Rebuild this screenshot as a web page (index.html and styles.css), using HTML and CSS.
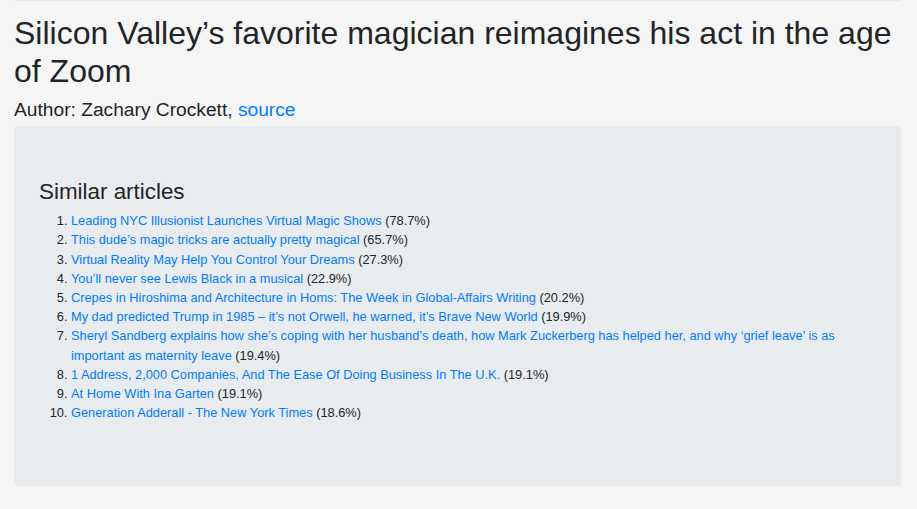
FILE: index.html
```html
<!DOCTYPE html>
<html>
<head>
<meta charset="utf-8">
<link rel="stylesheet" href="styles.css">
</head>
<body>
<div class="page">
  <hr class="rule">
  <h2 class="title">Silicon Valley’s favorite magician reimagines his act in the age of Zoom</h2>
  <p class="author">Author: Zachary Crockett, <a href="#">source</a></p>
  <div class="panel">
    <h4 class="panel-title">Similar articles</h4>
    <ol class="list">
      <li><a href="#">Leading NYC Illusionist Launches Virtual Magic Shows</a> (78.7%)</li>
      <li><a href="#">This dude’s magic tricks are actually pretty magical</a> (65.7%)</li>
      <li><a href="#">Virtual Reality May Help You Control Your Dreams</a> (27.3%)</li>
      <li><a href="#">You’ll never see Lewis Black in a musical</a> (22.9%)</li>
      <li><a href="#">Crepes in Hiroshima and Architecture in Homs: The Week in Global-Affairs Writing</a> (20.2%)</li>
      <li><a href="#">My dad predicted Trump in 1985 – it’s not Orwell, he warned, it’s Brave New World</a> (19.9%)</li>
      <li><a href="#">Sheryl Sandberg explains how she’s coping with her husband’s death, how Mark Zuckerberg has helped her, and why ‘grief leave’ is as important as maternity leave</a> (19.4%)</li>
      <li><a href="#">1 Address, 2,000 Companies, And The Ease Of Doing Business In The U.K.</a> (19.1%)</li>
      <li><a href="#">At Home With Ina Garten</a> (19.1%)</li>
      <li><a href="#">Generation Adderall - The New York Times</a> (18.6%)</li>
    </ol>
  </div>
</div>
</body>
</html>
```
FILE: styles.css
```css
html, body {
  margin: 0;
  padding: 0;
  background: #f5f5f5;
  color: #212529;
  font-family: "Liberation Sans", Arial, sans-serif;
}
a {
  color: #007bff;
  text-decoration: none;
}
.page {
  padding: 0 16px 0 14px;
}
.rule {
  margin: 0 0 13px 0;
  border: 0;
  border-top: 1px solid #e6e8ea;
}
.title {
  margin: 0 0 7px 0;
  font-size: 32px;
  font-weight: 400;
  line-height: 1.2;
}
.author {
  margin: 0 0 5px 0;
  font-size: 19.2px;
  line-height: 1.2;
}
.panel {
  background: #e9ecef;
  border-radius: 3px;
  padding: 53px 24px 48px 25px;
}
.panel-title {
  margin: 0 0 5.5px 0;
  font-size: 22.4px;
  font-weight: 400;
  line-height: 1.2;
}
.list {
  margin: 0 0 16px 0;
  padding-left: 32px;
  font-size: 12.8px;
  line-height: 1.5;
}
```
